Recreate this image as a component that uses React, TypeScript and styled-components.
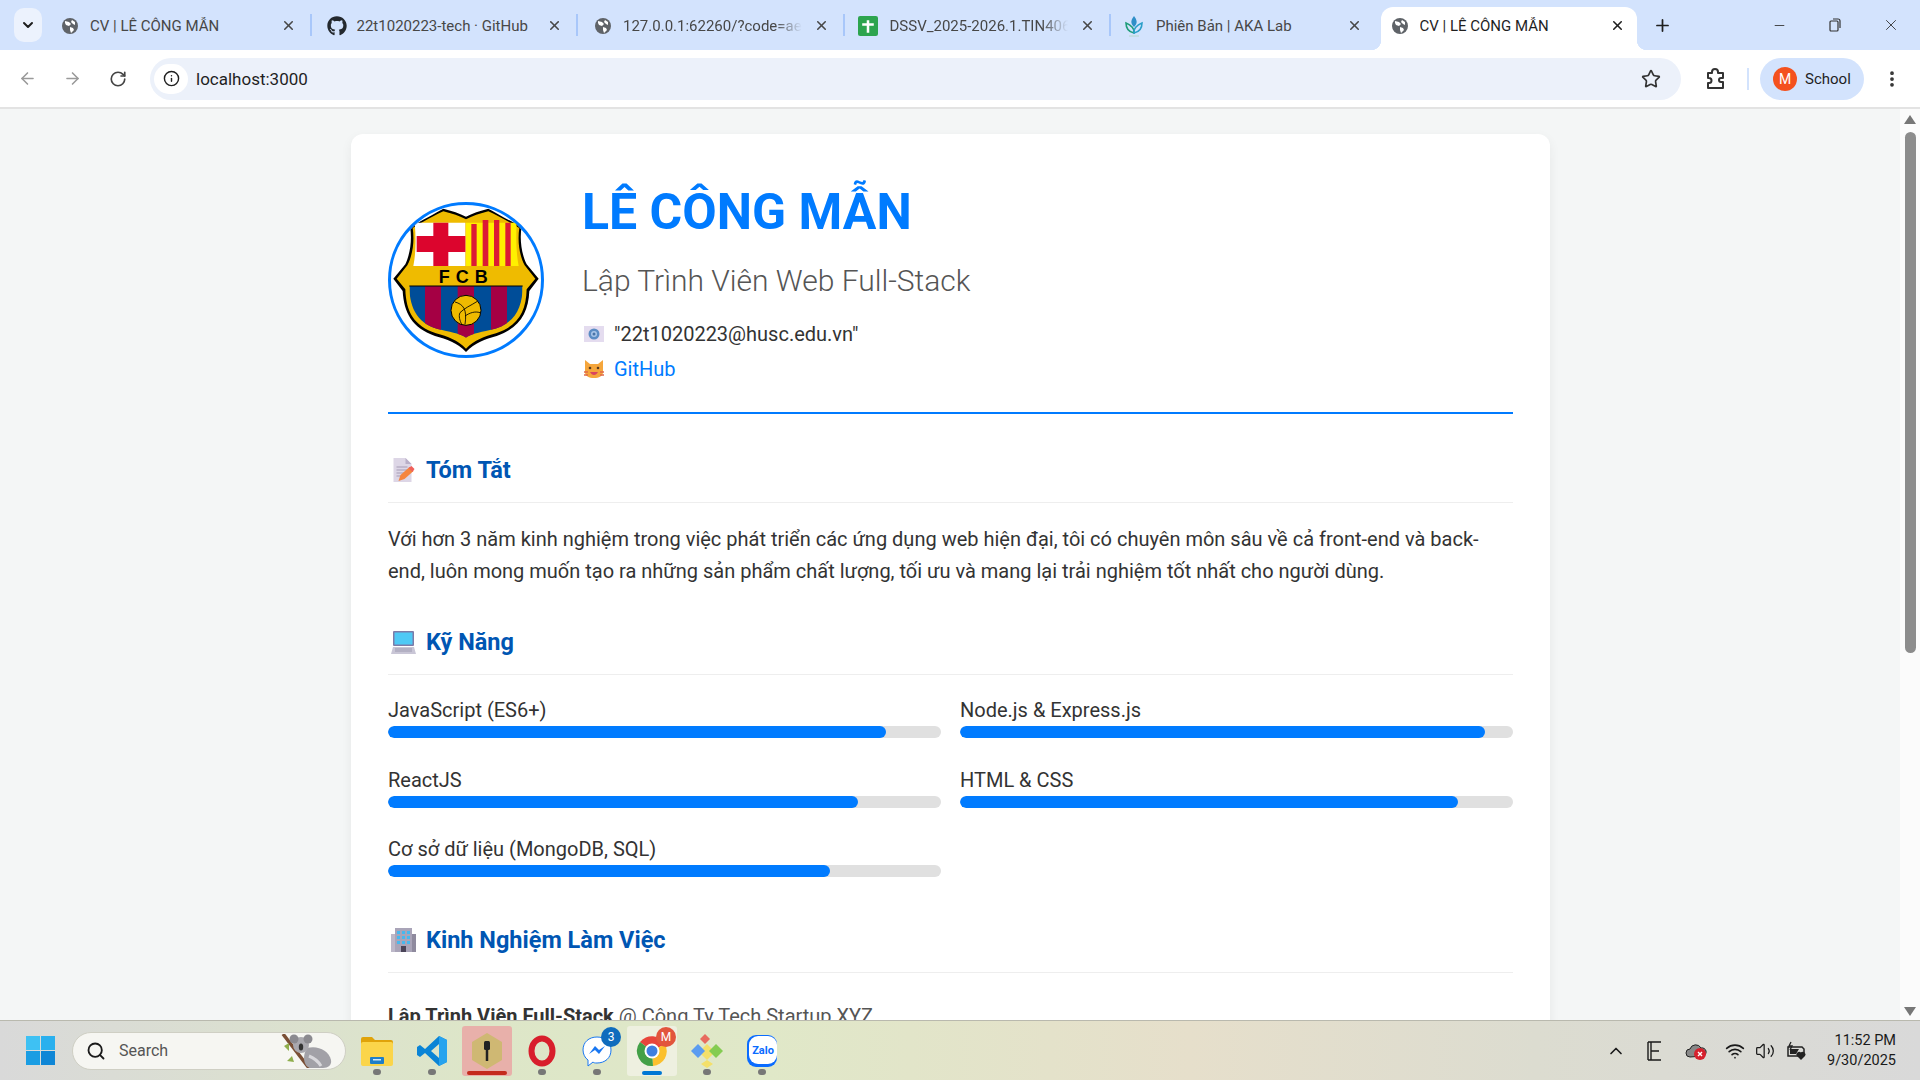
import React from 'react';
import styled, { createGlobalStyle } from 'styled-components';
import { ArrowLeft, ArrowRight, RotateCw, Info, Star, EllipsisVertical, X, Plus, ChevronDown, Minus, Search, ChevronUp, Wifi, Volume2 } from 'lucide-react';
import { FaGithub } from 'react-icons/fa';

const GlobalStyle = createGlobalStyle`
  html, body { margin: 0; padding: 0; height: 100%; overflow: hidden; }
  body { font-family: Roboto, "Liberation Sans", sans-serif; background: #f4f6f6; }
  * { box-sizing: border-box; }
`;

const Screen = styled.div`
  width: 1920px;
  height: 1080px;
  display: flex;
  flex-direction: column;
  overflow: hidden;
`;

/* browser chrome */
const TabBar = styled.div`
  height: 50px;
  flex: none;
  display: flex;
  align-items: flex-end;
  background: #d3e3fd;
  padding-left: 14px;
`;

const TabSearch = styled.div`
  width: 28px;
  height: 34px;
  margin: 0 3px 8px 0;
  display: flex;
  align-items: center;
  justify-content: center;
  background: #ecf2fd;
  border-radius: 10px;
  color: #1f1f1f;
`;

const Tab = styled.div<{ $active?: boolean }>`
  position: relative;
  width: ${p => (p.$active ? '256px' : '264.5px')};
  height: 43px;
  flex: none;
  display: flex;
  align-items: center;
  gap: 12px;
  margin-left: ${p => (p.$active ? '5px' : '0')};
  padding: 0 ${p => (p.$active ? '12px' : '14px')} 6px ${p => (p.$active ? '11px' : '17px')};
  background: ${p => (p.$active ? '#fff' : 'transparent')};
  border-radius: 12px 12px 0 0;
  color: ${p => (p.$active ? '#1f1f1f' : '#474747')};
  ${p =>
    p.$active &&
    `
    &::before, &::after {
      content: '';
      position: absolute;
      bottom: 0;
      width: 10px;
      height: 10px;
    }
    &::before { left: -10px; background: radial-gradient(circle at 0 0, transparent 10px, #fff 10.5px); }
    &::after { right: -10px; background: radial-gradient(circle at 100% 0, transparent 10px, #fff 10.5px); }
  `}
`;

const Favicon = styled.div<{ $shift?: boolean }>`
  width: 16px;
  height: 16px;
  flex: none;
  display: flex;
  align-items: center;
  justify-content: center;
  ${p => p.$shift && 'transform: translateX(-2px);'}
`;

const TabTitle = styled.span<{ $fade?: boolean }>`
  flex: 1;
  min-width: 0;
  font-size: 15px;
  white-space: nowrap;
  overflow: hidden;
  ${p => p.$fade && `mask-image: linear-gradient(to right, #000 85%, transparent 100%);`}
`;

const TabSeparator = styled.div`
  width: 2px;
  height: 22px;
  flex: none;
  margin-bottom: 14px;
  background: #a8c7fa;
`;

const NewTab = styled.div`
  width: 28px;
  height: 28px;
  margin: 0 0 11px 12px;
  display: flex;
  align-items: center;
  justify-content: center;
  color: #1f1f1f;
`;

const WindowControls = styled.div`
  margin-left: auto;
  height: 50px;
  display: flex;
  align-items: center;
  padding-right: 1px;
  color: #333;
`;

const WindowButton = styled.div`
  width: 56px;
  display: flex;
  justify-content: center;
`;

const Toolbar = styled.div`
  height: 59px;
  flex: none;
  display: flex;
  align-items: center;
  padding-left: 5px;
  background: #fff;
  border-bottom: 2px solid #e3e3e3;
`;

const NavButton = styled.div<{ $muted?: boolean }>`
  width: 45px;
  flex: none;
  display: flex;
  justify-content: center;
  color: ${p => (p.$muted ? '#9a9a9a' : '#444')};
`;

const Omnibox = styled.div`
  width: 1531px;
  height: 42px;
  flex: none;
  margin-left: 10px;
  display: flex;
  align-items: center;
  padding: 0 20px 0 4px;
  background: #ecf1fa;
  border-radius: 21px;
`;

const SecurityChip = styled.div`
  width: 34px;
  height: 30px;
  display: flex;
  align-items: center;
  justify-content: center;
  background: #fff;
  border-radius: 15px;
  color: #1f1f1f;
`;

const UrlText = styled.span`
  flex: 1;
  margin-left: 8px;
  font-size: 17px;
  color: #1f1f1f;
`;

const ExtensionButton = styled.div`
  width: 66px;
  flex: none;
  display: flex;
  justify-content: flex-end;
  padding-right: 20px;
`;

const ToolbarDivider = styled.div`
  width: 2px;
  height: 22px;
  flex: none;
  margin-right: 11px;
  background: #d3e3fd;
`;

const ProfilePill = styled.div`
  width: 104px;
  height: 42px;
  flex: none;
  display: flex;
  align-items: center;
  gap: 8px;
  padding-left: 13px;
  background: #d3e3fd;
  border-radius: 21px;
  font-size: 15px;
  color: #1f1f1f;
`;

const Avatar = styled.div`
  width: 24px;
  height: 24px;
  display: flex;
  align-items: center;
  justify-content: center;
  border-radius: 50%;
  background: #f4511e;
  color: #fff;
  font-size: 14px;
`;

const MenuButton = styled.div`
  width: 56px;
  flex: none;
  display: flex;
  justify-content: center;
  color: #333;
`;

/* page area */
const PageArea = styled.div`
  flex: 1;
  min-height: 0;
  display: flex;
  background: #f4f6f6;
`;

const Viewport = styled.div`
  flex: 1;
  min-width: 0;
  overflow: hidden;
  padding-top: 25px;
`;

const Scrollbar = styled.div`
  width: 20px;
  flex: none;
  display: flex;
  flex-direction: column;
  align-items: center;
  padding: 6px 0 4px;
  background: #fbfbfb;
`;

const ScrollArrow = styled.div<{ $down?: boolean }>`
  width: 0;
  height: 0;
  border-left: 6px solid transparent;
  border-right: 6px solid transparent;
  ${p => (p.$down ? 'border-top: 9px solid #777;' : 'border-bottom: 9px solid #777;')}
`;

const ScrollThumb = styled.div`
  width: 11px;
  height: 521px;
  margin: 8px 0 auto;
  background: #8c8c8c;
  border-radius: 6px;
`;

const Card = styled.main`
  width: 1199px;
  margin: 0 0 0 351px;
  padding: 38px 37px 60px 37px;
  background: #fff;
  border-radius: 12px;
  box-shadow: 0 4px 12px rgba(0, 0, 0, 0.06);
  color: #333;
`;

const Header = styled.header`
  display: flex;
  align-items: center;
  gap: 38px;
  padding-bottom: 25px;
  border-bottom: 2px solid #007bff;
`;

const CrestFrame = styled.div`
  width: 156px;
  height: 156px;
  flex: none;
  border-radius: 50%;
  border: 3px solid #007bff;
  overflow: hidden;
  background: #fff;
`;

const HeaderInfo = styled.div`
  display: flex;
  flex-direction: column;
`;

const Name = styled.h1`
  margin: 2px 0 0;
  font-size: 50px;
  line-height: 76px;
  font-weight: 700;
  color: #007bff;
`;

const Role = styled.h2`
  margin: 11px 0 15px;
  font-size: 30px;
  line-height: 40px;
  font-weight: 300;
  color: #555;
`;

const ContactRow = styled.div`
  display: flex;
  align-items: center;
  gap: 10px;
  height: 35px;
  padding-left: 2px;
  font-size: 20px;
  color: #333;

  &:last-child {
    margin-bottom: 1px;
  }
`;

const ContactLink = styled.a`
  color: #007bff;
  text-decoration: none;
`;

const Section = styled.section`
  margin-top: 40px;
`;

const SectionTitle = styled.h3`
  display: flex;
  align-items: center;
  gap: 10px;
  margin: 0;
  padding: 0 0 16px 3px;
  font-size: 23.5px;
  line-height: 32px;
  font-weight: 700;
  color: #0056b3;
  border-bottom: 1px solid #eee;
`;

const EmojiSlot = styled.span`
  width: 25px;
  flex: none;
  display: flex;
  justify-content: center;
`;

const Summary = styled.p`
  margin: 21px 0 -1px;
  font-size: 20px;
  line-height: 31.5px;
  color: #333;
`;

const SkillGrid = styled.div`
  display: grid;
  grid-template-columns: 1fr 1fr;
  column-gap: 19px;
  row-gap: 29.5px;
  margin: 23px 0 47px;
`;

const SkillName = styled.div`
  font-size: 20px;
  line-height: 24px;
  margin-bottom: 4px;
  color: #333;
`;

const SkillTrack = styled.div`
  height: 12px;
  border-radius: 6px;
  background: #e0e0e0;
  overflow: hidden;
`;

const SkillFill = styled.div`
  height: 100%;
  border-radius: 6px;
  background: #007bff;
`;

const JobTitle = styled.div`
  margin-top: 31px;
  font-size: 20px;
  line-height: 24px;
  color: #555;

  strong {
    font-weight: 700;
    color: #333;
  }
`;

/* taskbar */
const Taskbar = styled.footer`
  height: 60px;
  flex: none;
  display: flex;
  align-items: center;
  padding-left: 26px;
  background: linear-gradient(90deg, #d9d9d9 0%, #dde6c8 25%, #e0e8c8 40%, #e6dfcb 62%, #dcdcd0 80%, #d9d9d9 100%);
  border-top: 1px solid #b9b9ae;
  color: #1a1a1a;
`;

const SearchBox = styled.div`
  position: relative;
  width: 274px;
  height: 38px;
  margin: 0 6px 0 17px;
  display: flex;
  align-items: center;
  gap: 13px;
  padding-left: 13px;
  background: #f6f6f2;
  border: 1px solid #cfcfc4;
  border-radius: 19px;
  font-size: 16px;
  color: #555;
`;

const KoalaSpot = styled.div`
  margin-left: auto;
  margin-right: 10px;
  display: flex;
`;

const TaskSlot = styled.div<{ $bg?: string }>`
  position: relative;
  width: 50px;
  height: 50px;
  margin-right: 5px;
  display: flex;
  align-items: center;
  justify-content: center;
  background: ${p => p.$bg || 'transparent'};
  border-radius: 3px;
`;

const TaskMark = styled.div<{ $color?: string; $wide?: boolean }>`
  position: absolute;
  bottom: 1px;
  left: 50%;
  transform: translateX(-50%);
  width: ${p => (p.$wide ? '40px' : p.$color ? '20px' : '8px')};
  height: ${p => (p.$color ? '4px' : '6px')};
  border-radius: 3px;
  background: ${p => p.$color || '#777'};
`;

const Badge = styled.div<{ $color: string }>`
  position: absolute;
  top: 1px;
  right: 1px;
  width: 20px;
  height: 20px;
  display: flex;
  align-items: center;
  justify-content: center;
  border-radius: 50%;
  background: ${p => p.$color};
  color: #fff;
  font-size: 12px;
`;

const Tray = styled.div`
  margin-left: auto;
  display: flex;
  align-items: center;
`;

const TrayIcon = styled.div<{ $width: number }>`
  width: ${p => p.$width}px;
  display: flex;
  justify-content: center;
  color: #1a1a1a;
`;

const Clock = styled.div`
  width: 105px;
  padding-right: 24px;
  text-align: right;
  font-size: 14.5px;
  line-height: 20px;
  color: #1a1a1a;
`;

/* drawings */
const GlobeIcon = () => (
  <svg width="16" height="16" viewBox="0 0 16 16">
    <circle cx="8" cy="8" r="8" fill="#5f6368" />
    <path d="M3 3l4 1 2 2-2 2-3-1-1-2zM10 2l3 2v3l-2-1-2-2zM8 9l3 1 1 2-3 3-1-3z" fill="#fff" />
  </svg>
);

const SheetsIcon = () => (
  <svg width="20" height="20" viewBox="0 0 19 19" style={{ flex: 'none' }}>
    <rect width="19" height="19" rx="2" fill="#2da44e" />
    <path d="M4 8h11M9.500 4v12" stroke="#fff" strokeWidth="2.400" />
  </svg>
);

const LeafIcon = () => (
  <svg width="20" height="22" viewBox="0 0 20 22" fill="none" style={{ flex: 'none' }}>
    <path d="M10 1c-3 4-4 7 0 11 4-4 3-7 0-11z" fill="#2f8fc8" />
    <path d="M2 8c0 6 3 9 8 10 1-4-3-8-8-10z" stroke="#1f9d7a" strokeWidth="1.600" />
    <path d="M18 8c0 6-3 9-8 10-1-4 3-8 8-10z" stroke="#2b9fc9" strokeWidth="1.600" />
    <path d="M5 21h10" stroke="#b7d8cc" strokeWidth="1" />
  </svg>
);

const ExtensionIcon = () => (
  <svg width="22" height="22" viewBox="0 0 22 22" fill="none" stroke="#333" strokeWidth="2" strokeLinejoin="round">
    <path d="M3 5h4V4a3 3 0 016 0v1h5v5h-2a2 2 0 000 4h2v6H3v-5h1a2.500 2.500 0 000-5H3z" />
  </svg>
);

const Crest = () => (
  <svg width="150" height="150" viewBox="33 27 450 450">
    <defs>
      <clipPath id="lowerShield">
        <path d="M88 270H428C428 340 400 388 330 402C295 410 270 415 258 425C246 415 220 410 186 402C116 388 88 340 88 270Z" />
      </clipPath>
    </defs>
    <path
      d="M190 38C215 44 240 52 258 62C276 52 300 44 325 38C350 52 385 72 425 92C418 130 425 175 440 205L476 248L448 285C445 350 420 395 350 420C315 430 285 440 258 468C232 440 200 430 165 420C95 395 72 350 68 285L40 248L76 205C90 175 97 130 90 92C130 72 165 52 190 38Z"
      fill="#000"
    />
    <path
      d="M190 46C215 52 240 60 258 70C276 60 300 52 325 46C350 58 385 76 418 96C412 135 418 178 434 208L466 248L440 280C438 348 414 390 348 412C312 422 284 432 258 458C232 432 204 422 168 412C102 390 78 348 76 280L50 248L82 208C98 178 104 135 98 96C131 76 165 58 190 46Z"
      fill="#efbb00"
    />
    <path d="M104 80H256V210H100C108 170 108 125 104 80Z" fill="#fff" />
    <path d="M160 80H205V120H256V168H205V210H160V168H110V120H160Z" fill="#dc052d" />
    <path d="M258 80H410C408 125 408 170 416 210H258Z" fill="#fff000" />
    <path d="M274 84H290V210H274ZM308 72H325V210H308ZM342 72H358V210H342ZM376 80H392V210H376Z" fill="#dc1a35" />
    <g clipPath="url(#lowerShield)">
      <rect x="88" y="270" width="340" height="160" fill="#004d98" />
      <path d="M135 270H183V430H135ZM233 270H282V430H233ZM333 270H381V430H333Z" fill="#a50044" />
    </g>
    <path d="M88 270H428" stroke="#000" strokeWidth="3" />
    <text x="259" y="261" textAnchor="middle" fontFamily="Liberation Sans" fontWeight="700" fontSize="54" letterSpacing="18" fill="#000">
      FCB
    </text>
    <circle cx="258" cy="343" r="45" fill="#efbb00" stroke="#000" strokeWidth="3" />
    <path d="M225 318C250 325 262 340 255 385M292 316C270 330 255 335 240 350C235 360 240 375 245 385M300 350C285 345 270 350 255 360" stroke="#000" strokeWidth="2.500" fill="none" />
  </svg>
);

const MailEmoji = () => (
  <svg width="20" height="16" viewBox="0 0 20 16">
    <rect width="20" height="16" fill="#e4dcef" />
    <circle cx="10" cy="8" r="5.500" fill="#5b8cc4" />
    <circle cx="10" cy="8" r="3" fill="#a9c5e8" />
    <circle cx="10" cy="8" r="1.500" fill="#4873a8" />
  </svg>
);

const CatEmoji = () => (
  <svg width="20" height="20" viewBox="0 0 20 20">
    <path d="M1 1l5 4h8l5-4v12c0 4-4 6-9 6s-9-2-9-6z" fill="#f5a63c" />
    <path d="M0 13h4M0 16h4M16 13h4M16 16h4" stroke="#e06a4a" strokeWidth="1.500" />
    <circle cx="6" cy="9" r="1.300" fill="#5b3a1f" />
    <circle cx="14" cy="9" r="1.300" fill="#5b3a1f" />
    <path d="M6 13c2 4 6 4 8 0z" fill="#d9455f" />
  </svg>
);

const MemoEmoji = () => (
  <svg width="23" height="24" viewBox="0 0 22 24">
    <path d="M1 0h12l6 6v18H1z" fill="#ddd6e6" />
    <path d="M13 0l6 6h-6z" fill="#b9afc8" />
    <path d="M4 9h11M4 12h11M4 15h8M4 18h5" stroke="#a59bb5" strokeWidth="1" />
    <path d="M6 23l2-6 9-8 4 4-9 8z" fill="#f5853f" />
    <path d="M16 10l3-2 3 3-2 3z" fill="#f0605a" />
  </svg>
);

const LaptopEmoji = () => (
  <svg width="25" height="23" viewBox="0 0 25 23">
    <rect x="2" y="0" width="21" height="15" rx="1" fill="#7d7ba8" />
    <rect x="3.500" y="1.500" width="18" height="12" fill="#4fc9f5" />
    <path d="M2 16h21l2 7H0z" fill="#c9c6d6" />
    <path d="M4 18h17M4 20h17" stroke="#9d9ab0" strokeWidth="1" />
  </svg>
);

const BuildingEmoji = () => (
  <svg width="25" height="24" viewBox="0 0 25 24">
    <rect x="4" y="0" width="17" height="24" fill="#a9a4b8" />
    <rect x="0" y="6" width="4" height="18" fill="#bdb8c9" />
    <rect x="21" y="6" width="4" height="18" fill="#8f8a9e" />
    <g fill="#47b8ee">
      <rect x="6" y="3" width="3" height="3" />
      <rect x="11" y="3" width="3" height="3" />
      <rect x="16" y="3" width="3" height="3" />
      <rect x="6" y="8" width="3" height="3" />
      <rect x="11" y="8" width="3" height="3" />
      <rect x="16" y="8" width="3" height="3" />
      <rect x="6" y="13" width="3" height="3" />
      <rect x="11" y="13" width="3" height="3" />
      <rect x="16" y="13" width="3" height="3" />
    </g>
    <rect x="10" y="18" width="5" height="6" fill="#4a4458" />
  </svg>
);

const WindowsLogo = () => (
  <svg width="29" height="29" viewBox="0 0 29 29" fill="#1c9ce6">
    <rect width="14" height="14" fill="#3ec1f3" />
    <rect x="15" width="14" height="14" fill="#2ab0ee" />
    <rect y="15" width="14" height="14" fill="#1a9de3" />
    <rect x="15" y="15" width="14" height="14" fill="#0f86d6" />
  </svg>
);

const Koala = () => (
  <svg width="54" height="34" viewBox="0 0 54 34">
    <path d="M2 0l26 34" stroke="#7a4f35" strokeWidth="3.500" />
    <path d="M3 12l5-3 0 8zM11 22l-5 5 7 1z" fill="#8fae4d" />
    <path d="M26 14c10-3 22 2 24 12 1 5-3 8-8 8H30c-6 0-10-10-4-20z" fill="#a2a1a7" />
    <circle cx="20" cy="11" r="8" fill="#a9a8ae" />
    <circle cx="13" cy="5" r="4.500" fill="#8b8a90" />
    <circle cx="27" cy="5" r="4.500" fill="#8b8a90" />
    <ellipse cx="20" cy="13" rx="2.200" ry="3.500" fill="#333" />
    <path d="M28 22c5 2 9 5 12 10" stroke="#d9d8dc" strokeWidth="3" fill="none" />
  </svg>
);

const FolderIcon = () => (
  <svg width="32" height="30" viewBox="0 0 32 30">
    <path d="M0 3a2 2 0 012-2h9l3 3h16a2 2 0 012 2v4H0z" fill="#e0a30a" />
    <rect y="6" width="32" height="24" rx="2" fill="#fbd54a" />
    <rect x="9" y="21" width="14" height="7" rx="1" fill="#1f7fc8" />
    <rect x="12" y="23" width="8" height="1.500" fill="#cfe7fa" />
  </svg>
);

const VsCodeIcon = () => (
  <svg width="30" height="30" viewBox="0 0 30 30">
    <path d="M22 0l8 4v22l-8 4L8 17l-5 4-3-2v-8l3-2 5 4zM22 8l-8 7 8 7z" fill="#0a84d6" />
    <path d="M22 0l8 4v22l-8 4z" fill="#27a3ee" />
  </svg>
);

const GitForkIcon = () => (
  <svg width="32" height="36" viewBox="0 0 32 36">
    <path d="M16 0l15 9v18l-15 9-15-9V9z" fill="#cfb873" />
    <path d="M16 8v20" stroke="#222" strokeWidth="2.500" />
    <rect x="13" y="8" width="6" height="9" rx="1.500" fill="#222" />
  </svg>
);

const OperaIcon = () => (
  <svg width="30" height="32" viewBox="0 0 30 32">
    <ellipse cx="15" cy="16" rx="10.500" ry="12.500" fill="none" stroke="#d81e2c" strokeWidth="6" />
  </svg>
);

const MessengerIcon = () => (
  <svg width="30" height="32" viewBox="0 0 30 32">
    <path d="M15 2c8 0 14 5 14 13s-6 13-14 13c-2 0-3 0-4-1l-5 4v-6c-3-2-5-6-5-10C1 7 7 2 15 2z" fill="#fff" stroke="#1877f2" strokeWidth="1" />
    <path d="M7 19l6-8 4 4 6-4-6 8-4-4z" fill="#1877f2" />
  </svg>
);

const ChromeIcon = () => (
  <svg width="32" height="32" viewBox="0 0 32 32">
    <path d="M16 16L4 7A15 15 0 0129 9z" fill="#e8453c" />
    <path d="M16 16L29 9a15 15 0 01-12 22z" fill="#fbc02d" />
    <path d="M16 16l1 15A15 15 0 014 7z" fill="#43a047" />
    <circle cx="16" cy="16" r="7.500" fill="#fff" />
    <circle cx="16" cy="16" r="5.500" fill="#3f7fe0" />
  </svg>
);

const DiamondsIcon = () => (
  <svg width="32" height="34" viewBox="0 0 32 34">
    <path d="M16 10l8 8-8 8-8-8z" fill="#f4e06a" />
    <path d="M7 10l7 7-7 7-7-7z" fill="#5b9cf0" />
    <path d="M25 10l7 7-7 7-7-7z" fill="#84cc52" />
    <path d="M14 0l5 5-5 5-5-5z" fill="#e86b5f" />
    <path d="M16 26l6 4-6 4-6-4z" fill="#f4e06a" />
  </svg>
);

const ZaloIcon = () => (
  <svg width="30" height="32" viewBox="0 0 30 32">
    <rect width="30" height="32" rx="9" fill="#0a6cff" />
    <rect x="2" y="1" width="28" height="28" rx="9" fill="#fff" />
    <text x="16" y="19" textAnchor="middle" fontFamily="Roboto" fontSize="11" fontWeight="700" fill="#0a6cff">
      Zalo
    </text>
  </svg>
);

const WordTrayIcon = () => (
  <svg width="16" height="20" viewBox="0 0 16 20" fill="none" stroke="#1a1a1a" strokeWidth="1.400">
    <path d="M1 1h13M1 19h13M1 1v18M4 1v18M4 10h8" />
  </svg>
);

const CloudAlertIcon = () => (
  <svg width="22" height="20" viewBox="0 0 22 20">
    <path d="M5 16a4 4 0 010-8 6 6 0 0111-1 4 4 0 012 8z" fill="#888" stroke="#222" strokeWidth="1" />
    <circle cx="15" cy="13" r="6" fill="#d6202c" />
    <path d="M13 11l4 4M17 11l-4 4" stroke="#fff" strokeWidth="1.400" />
  </svg>
);

const BatteryHeartIcon = () => (
  <svg width="22" height="20" viewBox="0 0 22 20">
    <path d="M3 6h14l2 2v4h-3l-2 3H3z" fill="none" stroke="#222" strokeWidth="1.500" />
    <path d="M5 8h9l-3 5H5z" fill="#222" />
    <path d="M6 1L4 5h3L5 9" stroke="#222" strokeWidth="1.300" fill="none" />
    <path d="M16 19l-4-4a2.500 2.500 0 014-3 2.500 2.500 0 014 3z" fill="#222" />
  </svg>
);

const SKILLS = [
  { name: 'JavaScript (ES6+)', level: 90 },
  { name: 'Node.js & Express.js', level: 95 },
  { name: 'ReactJS', level: 85 },
  { name: 'HTML & CSS', level: 90 },
  { name: 'Cơ sở dữ liệu (MongoDB, SQL)', level: 80 },
];

const App = () => (
  <Screen>
    <GlobalStyle />
    <TabBar>
      <TabSearch>
        <ChevronDown size={16} strokeWidth={3} />
      </TabSearch>
      <Tab>
        <Favicon><GlobeIcon /></Favicon>
        <TabTitle>CV | LÊ CÔNG MẪN</TabTitle>
        <X size={15} strokeWidth={2.500} />
      </Tab>
      <TabSeparator />
      <Tab>
        <Favicon><FaGithub size={20} color="#24292e" style={{ flex: 'none' }} /></Favicon>
        <TabTitle>22t1020223-tech · GitHub</TabTitle>
        <X size={15} strokeWidth={2.500} />
      </Tab>
      <TabSeparator />
      <Tab>
        <Favicon><GlobeIcon /></Favicon>
        <TabTitle $fade>127.0.0.1:62260/?code=ae4d2f90</TabTitle>
        <X size={15} strokeWidth={2.500} />
      </Tab>
      <TabSeparator />
      <Tab>
        <Favicon $shift><SheetsIcon /></Favicon>
        <TabTitle $fade>DSSV_2025-2026.1.TIN4063</TabTitle>
        <X size={15} strokeWidth={2.500} />
      </Tab>
      <TabSeparator />
      <Tab>
        <Favicon $shift><LeafIcon /></Favicon>
        <TabTitle>Phiên Bản | AKA Lab</TabTitle>
        <X size={15} strokeWidth={2.500} />
      </Tab>
      <Tab $active>
        <Favicon><GlobeIcon /></Favicon>
        <TabTitle>CV | LÊ CÔNG MẪN</TabTitle>
        <X size={15} strokeWidth={2.500} />
      </Tab>
      <NewTab>
        <Plus size={19} strokeWidth={2.200} />
      </NewTab>
      <WindowControls>
        <WindowButton>
          <Minus size={15} strokeWidth={1.400} />
        </WindowButton>
        <WindowButton>
          <svg width="14" height="14" viewBox="0 0 14 14" fill="none" stroke="#333" strokeWidth="1.200">
            <rect x="2" y="3" width="8" height="10" rx="1" />
            <path d="M5 1h5a2 2 0 012 2v7" />
          </svg>
        </WindowButton>
        <WindowButton>
          <X size={18} strokeWidth={1.200} />
        </WindowButton>
      </WindowControls>
    </TabBar>

    <Toolbar>
      <NavButton $muted>
        <ArrowLeft size={19} />
      </NavButton>
      <NavButton $muted>
        <ArrowRight size={19} />
      </NavButton>
      <NavButton>
        <RotateCw size={18} strokeWidth={2.200} />
      </NavButton>
      <Omnibox>
        <SecurityChip>
          <Info size={17} />
        </SecurityChip>
        <UrlText>localhost:3000</UrlText>
        <Star size={20} color="#333" strokeWidth={2} />
      </Omnibox>
      <ExtensionButton>
        <ExtensionIcon />
      </ExtensionButton>
      <ToolbarDivider />
      <ProfilePill>
        <Avatar>M</Avatar>
        School
      </ProfilePill>
      <MenuButton>
        <EllipsisVertical size={20} strokeWidth={2.500} />
      </MenuButton>
    </Toolbar>

    <PageArea>
      <Viewport>
        <Card>
          <Header>
            <CrestFrame>
              <Crest />
            </CrestFrame>
            <HeaderInfo>
              <Name>LÊ CÔNG MẪN</Name>
              <Role>Lập Trình Viên Web Full-Stack</Role>
              <ContactRow>
                <MailEmoji />
                "22t1020223@husc.edu.vn"
              </ContactRow>
              <ContactRow>
                <CatEmoji />
                <ContactLink href="#">GitHub</ContactLink>
              </ContactRow>
            </HeaderInfo>
          </Header>

          <Section>
            <SectionTitle>
              <EmojiSlot><MemoEmoji /></EmojiSlot>
              Tóm Tắt
            </SectionTitle>
            <Summary>
              Với hơn 3 năm kinh nghiệm trong việc phát triển các ứng dụng web hiện đại, tôi có chuyên môn sâu về cả front-end và back-end, luôn mong muốn tạo ra những sản phẩm chất lượng, tối ưu và mang lại trải nghiệm tốt nhất cho người dùng.
            </Summary>
          </Section>

          <Section>
            <SectionTitle>
              <EmojiSlot><LaptopEmoji /></EmojiSlot>
              Kỹ Năng
            </SectionTitle>
            <SkillGrid>
              {SKILLS.map(skill => (
                <div key={skill.name}>
                  <SkillName>{skill.name}</SkillName>
                  <SkillTrack>
                    <SkillFill style={{ width: `${skill.level}%` }} />
                  </SkillTrack>
                </div>
              ))}
            </SkillGrid>
          </Section>

          <Section>
            <SectionTitle>
              <EmojiSlot><BuildingEmoji /></EmojiSlot>
              Kinh Nghiệm Làm Việc
            </SectionTitle>
            <JobTitle>
              <strong>Lập Trình Viên Full-Stack</strong> @ Công Ty Tech Startup XYZ
            </JobTitle>
          </Section>
        </Card>
      </Viewport>
      <Scrollbar>
        <ScrollArrow />
        <ScrollThumb />
        <ScrollArrow $down />
      </Scrollbar>
    </PageArea>

    <Taskbar>
      <WindowsLogo />
      <SearchBox>
        <Search size={20} color="#1a1a1a" strokeWidth={2.200} />
        Search
        <KoalaSpot>
          <Koala />
        </KoalaSpot>
      </SearchBox>
      <TaskSlot>
        <FolderIcon />
        <TaskMark />
      </TaskSlot>
      <TaskSlot>
        <VsCodeIcon />
        <TaskMark />
      </TaskSlot>
      <TaskSlot $bg="#e8b0aa">
        <GitForkIcon />
        <TaskMark $color="#c42b1c" $wide />
      </TaskSlot>
      <TaskSlot>
        <OperaIcon />
        <TaskMark />
      </TaskSlot>
      <TaskSlot>
        <MessengerIcon />
        <Badge $color="#0f6cbd">3</Badge>
        <TaskMark />
      </TaskSlot>
      <TaskSlot $bg="#eef0e0">
        <ChromeIcon />
        <Badge $color="#e2553d">M</Badge>
        <TaskMark $color="#0078d4" />
      </TaskSlot>
      <TaskSlot>
        <DiamondsIcon />
        <TaskMark />
      </TaskSlot>
      <TaskSlot>
        <ZaloIcon />
        <TaskMark />
      </TaskSlot>
      <Tray>
        <TrayIcon $width={38}>
          <ChevronUp size={20} />
        </TrayIcon>
        <TrayIcon $width={40}>
          <WordTrayIcon />
        </TrayIcon>
        <TrayIcon $width={42}>
          <CloudAlertIcon />
        </TrayIcon>
        <TrayIcon $width={36}>
          <Wifi size={20} />
        </TrayIcon>
        <TrayIcon $width={24}>
          <Volume2 size={20} strokeWidth={1.500} />
        </TrayIcon>
        <TrayIcon $width={38}>
          <BatteryHeartIcon />
        </TrayIcon>
        <Clock>
          11:52 PM
          <br />
          9/30/2025
        </Clock>
      </Tray>
    </Taskbar>
  </Screen>
);

export default App;
